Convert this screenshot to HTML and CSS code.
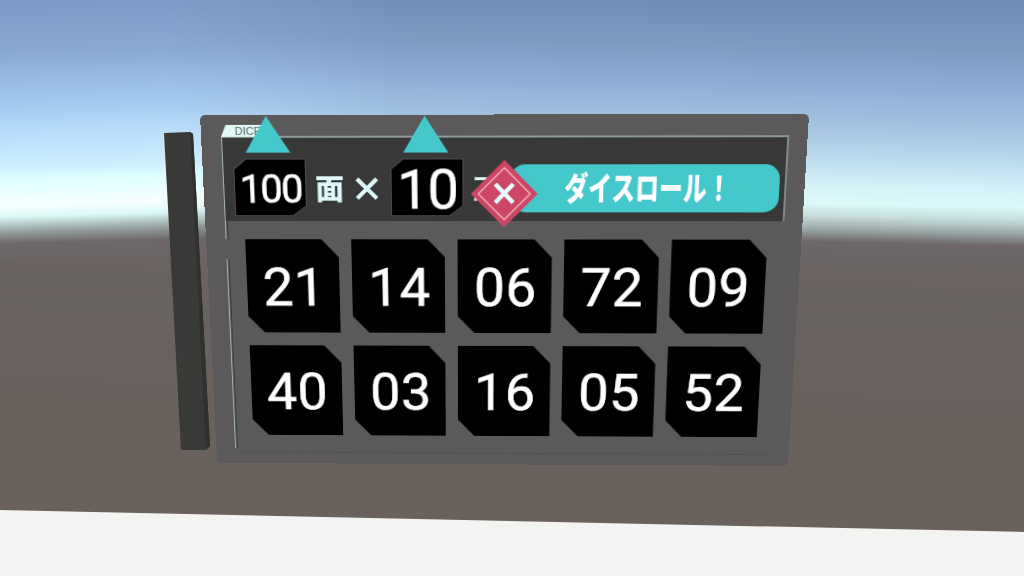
FILE: index.html
```html
<!DOCTYPE html>
<html lang="ja">
<head>
  <meta charset="utf-8">
  <title>Dice Roller</title>
  <link rel="stylesheet" href="styles.css">
</head>
<body>
  <div class="scene">
    <svg class="world" viewBox="0 0 1024 576">
      <!-- floor -->
      <polygon points="0,510 1024,532 1024,576 0,576" fill="#f3f3f2"/>
      <!-- handle bar -->
      <polygon points="164,133 190,132 193,134 210,446 206,450 181,450" fill="#393938"/>
      <polygon points="190,132 193,134 210,446 206,450" fill="#30302f"/>
    </svg>

    <div class="panel">
      <div class="tab">DICE</div>
      <div class="header">
        <div class="stepper">
          <div class="arrow"></div>
          <div class="value small"><span>100</span></div>
        </div>
        <div class="unit">面</div>
        <div class="times">×</div>
        <div class="stepper">
          <div class="arrow"></div>
          <div class="value"><span>10</span></div>
        </div>
        <div class="unit count">コ</div>
        <button class="roll"><span>ダイスロール！</span></button>
      </div>
      <div class="results">
        <div class="die">21</div>
        <div class="die">14</div>
        <div class="die">06</div>
        <div class="die">72</div>
        <div class="die">09</div>
        <div class="die">40</div>
        <div class="die">03</div>
        <div class="die">16</div>
        <div class="die">05</div>
        <div class="die">52</div>
      </div>
      <svg class="close" viewBox="0 0 68 70">
        <polygon points="34,0.5 67.5,35 34,69.5 0.5,35" fill="#cb4765"/>
        <polygon points="34,8.5 60,35 34,61.5 8,35" fill="none" stroke="#f3b3b9" stroke-width="1.4"/>
        <path d="M25 25 L43 44 M43 25 L25 44" stroke="#e6fbfb" stroke-width="4.4"/>
      </svg>
    </div>
  </div>
</body>
</html>
```

FILE: styles.css
```css
body {
  margin: 0;
  overflow: hidden;
  font-family: Roboto, "Liberation Sans", "Noto Sans CJK JP", sans-serif;
}
.scene {
  position: relative;
  width: 1024px;
  height: 576px;
  overflow: hidden;
  background: linear-gradient(181.2deg, #708cb4 0, #7f99c1 52px, #90abd5 88px, #9fbedd 122px, #bbdaec 162px, #d5f1f7 188px, #dcf8f9 208px, #c8dcdc 220px, #9ca9a9 233px, #6e6868 246px, #6b6465 259px, #69635f 300px, #68615d 400px, #6a615c 576px);
}
/* brighter part of the sky */
.scene::before {
  content: "";
  position: absolute;
  left: 0;
  top: 0;
  width: 400px;
  height: 260px;
  background: linear-gradient(178.3deg, #7c99c5 0, #8ba9d3 53px, #a4c8ee 103px, #b9dcf9 133px, #cfefff 168px, #dfffff 181px, #f7ffff 206px, #d9f9f6 217px, #98a5a3 231px, #6e6868 244px, #6b6465 262px);
  -webkit-mask-image: linear-gradient(90deg, #000 40%, transparent);
  mask-image: linear-gradient(90deg, #000 40%, transparent);
}
.world {
  position: relative;
  display: block;
  width: 1024px;
  height: 576px;
}
/* board seen slightly from above */
.panel {
  position: absolute;
  left: 200px;
  top: 115px;
  width: 602px;
  height: 371px;
  box-sizing: border-box;
  padding: 21px 18px 0 20px;
  border-radius: 5px;
  background: #5b595a;
  transform-origin: 0 0;
  transform: matrix3d(0.99956, -0.00165, 0, -0.00001994, 0.048995, 1.00006, 0, 0.0001793, 0, 0, 1, 0, 0, 0, 0, 1);
}
.tab {
  position: absolute;
  left: 20px;
  top: 10px;
  width: 50px;
  height: 12px;
  box-sizing: border-box;
  padding-left: 14px;
  font: 11px/13px "Liberation Sans", sans-serif;
  color: #5a6463;
  background: #e0f8f6;
  clip-path: polygon(5px 0, 100% 0, 100% 100%, 0 100%);
}
.header {
  display: flex;
  height: 87px;
  box-sizing: border-box;
  padding: 21px 0 0 10px;
  border-top: 2px solid #8d9a99;
  border-left: 1.5px solid #a3b5b4;
  border-right: 2px solid #7e8888;
  background: #383838;
}
.stepper {
  position: relative;
  flex: none;
  width: 73px;
  height: 60px;
}
.arrow {
  position: absolute;
  left: 13px;
  top: -43px;
  width: 45px;
  height: 37px;
  background: #45c8cc;
  clip-path: polygon(48% 0, 100% 100%, 0 100%);
}
.value {
  height: 59px;
  padding: 1px;
  box-sizing: border-box;
  background: #4c4c4c;
  clip-path: polygon(12px 0, 100% 0, 100% 48px, 60px 100%, 0 100%, 0 10px);
}
.value span {
  display: block;
  height: 57px;
  line-height: 63px;
  text-align: center;
  text-indent: 1px;
  font-size: 56px;
  letter-spacing: -1px;
  color: #fff;
  -webkit-text-stroke: 0.6px #fff;
  background: #000;
  clip-path: polygon(12px 0, 100% 0, 100% 47px, 58px 100%, 0 100%, 0 10px);
}
.value.small span {
  font-size: 40px;
  line-height: 62px;
  letter-spacing: -1.6px;
}
.unit {
  flex: none;
  width: 28px;
  margin-left: 9px;
  font: 900 29px/58px "Noto Sans CJK JP", sans-serif;
  color: #dff8f8;
}
.unit.count {
  margin-left: 5px;
  font-size: 37px;
  font-weight: 400;
}
.times {
  flex: none;
  width: 34px;
  margin: 0 7px 0 7px;
  text-align: center;
  font: 900 34px/60px "Noto Sans CJK JP", sans-serif;
  color: #dff8f8;
}
.roll {
  flex: none;
  width: 268px;
  height: 49px;
  margin: 6px 0 0 14px;
  padding: 0;
  border: none;
  border-radius: 15px;
  background: #45c8cc;
  color: #fff;
  font: 900 34px/46px "Noto Sans CJK JP", sans-serif;
}
.roll span {
  display: block;
  margin: 0 -20px;
  white-space: nowrap;
  transform: translate(3px, -2px) scaleX(0.7);
}
.results {
  display: grid;
  grid-template-columns: repeat(5, 95.7px);
  grid-auto-rows: 99px;
  gap: 14px 12.5px;
  height: 251px;
  box-sizing: border-box;
  padding: 19px 0 0 15.5px;
  margin: 0 -1px 0 4px;
  border-radius: 4px 0 0 0;
  border-bottom: 1px solid #525051;
  background: #5a5a5b;
}
.die {
  text-align: center;
  font-size: 56px;
  line-height: 103px;
  letter-spacing: 0.5px;
  text-indent: 2px;
  color: #fff;
  -webkit-text-stroke: 0.6px #fff;
  background: #000;
  clip-path: polygon(0 0, 78px 0, 100% 19px, 100% 100%, 17px 100%, 0 81px);
}
.close {
  position: absolute;
  left: 269px;
  top: 44.5px;
  width: 68px;
  height: 70px;
}
/* bright edge at the left of the results */
.panel::before,
.panel::after {
  content: "";
  position: absolute;
  left: 20px;
  width: 1px;
  border-left: 1.5px solid #a3b5b4;
  border-right: 1.5px solid #3c3e3e;
}
.panel::before {
  top: 107px;
  height: 20px;
}
.panel::after {
  top: 148px;
  height: 206px;
}
```
